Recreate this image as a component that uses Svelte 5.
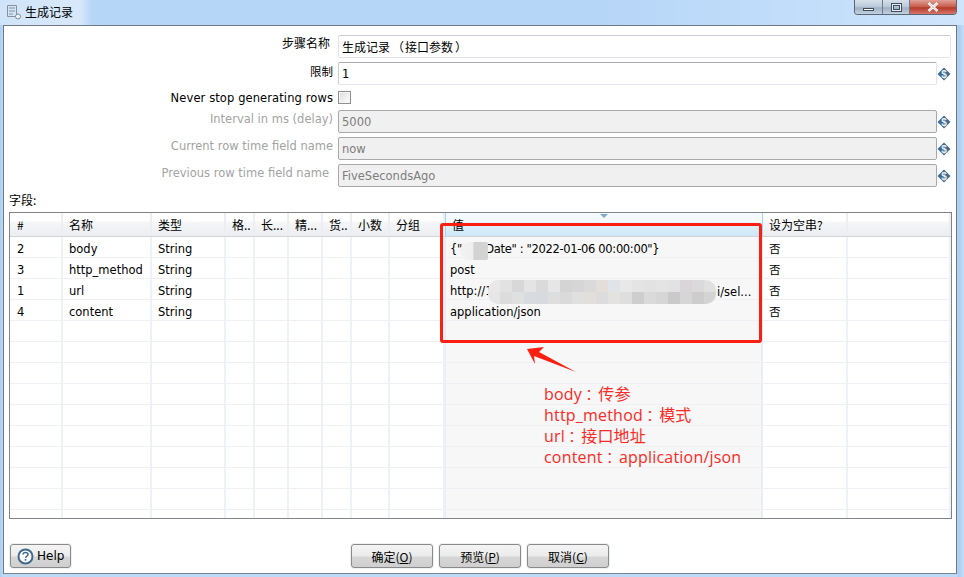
<script>
  const columns = [
    { label: "#", key: "id" },
    { label: "名称", key: "name" },
    { label: "类型", key: "type" },
    { label: "格.." },
    { label: "长..." },
    { label: "精..." },
    { label: "货.." },
    { label: "小数" },
    { label: "分组" },
    { label: "值", key: "value", sorted: true },
    { label: "设为空串?", key: "nul" },
    { label: "" },
  ];

  const rows = [
    { id: "2", name: "body", type: "String", value: '{"       Date" : "2022-01-06 00:00:00"}', nul: "否", tight: true },
    { id: "3", name: "http_method", type: "String", value: "post", nul: "否" },
    { id: "1", name: "url", type: "String", value: "http://1", nul: "否" },
    { id: "4", name: "content", type: "String", value: "application/json", nul: "否" },
    {}, {}, {}, {}, {}, {}, {}, {}, {}, {},
  ];

  const fields = [
    { label: "Interval in ms (delay)", value: "5000" },
    { label: "Current row time field name", value: "now" },
    { label: "Previous row time field name", value: "FiveSecondsAgo", inset: true },
  ];

  const notes = [
    ["body", "传参"],
    ["http_method", "模式"],
    ["url", "接口地址"],
    ["content", "application/json"],
  ];

  // mosaic hiding the url host
  const tiles = [
    "#e8e8e8", "#e2e2e2", "#d8d8d8", "#e4e4e4", "#dadada", "#e6e6e6", "#d4d4d4", "#d6d6d6", "#dadada", "#e3ded9", "#e0e4e9", "#e8e8e8", "#e4e4e4", "#e2e2e2", "#e4e4e4", "#e2e2e2", "#dad5d8", "#dadada", "#e0e0e0",
    "#e6e6e6", "#dcdcdc", "#e0e0e0", "#d8dbe0", "#d7dade", "#dedede", "#dadada", "#e0e0e0", "#e2ded9", "#dcdcdc", "#e4e2e0", "#dedede", "#cecece", "#dadada", "#d6d6d6", "#cacaca", "#d6d6d6", "#cdcdcd", "#d4d4d4",
  ];
</script>

<div class="window">
  <header class="titlebar">
    <svg class="app-icon" width="16" height="16" viewBox="0 0 16 16">
      <path d="M1.5 1.5h9v11h-9z M3 4h6 M3 7h6 M3 10h4" fill="none" stroke="#8a9098" stroke-width="1" />
      <circle cx="12" cy="12.5" r="2.5" fill="#eef3f8" stroke="#7d8b99" />
    </svg>
    <span class="title">生成记录</span>
    <div class="controls">
      <div class="ctl min"><i></i></div>
      <div class="ctl max"><i></i></div>
      <div class="ctl close">
        <svg width="14" height="10" viewBox="0 0 14 10">
          <path d="M2.5 1l9 8M11.5 1l-9 8" stroke="#fff" stroke-width="2.6" />
          <path d="M2.5 1l9 8M11.5 1l-9 8" stroke="#6b3a36" stroke-width="0.5" opacity="0.5" />
        </svg>
      </div>
    </div>
  </header>

  <main class="panel">
    <section class="form">
      <label class="up">步骤名称</label>
      <div class="input wide">生成记录<span class="paren open">（</span>接口参数<span class="paren close-p">）</span></div>

      <label>限制</label>
      <div class="input strong">1</div>
      {@render varIcon()}

      <label class="plain">Never stop generating rows</label>
      <div class="check-row"><span class="check"></span></div>
      <span></span>

      {#each fields as f}
        <label class="off" class:inset={f.inset}>{f.label}</label>
        <div class="input disabled">{f.value}</div>
        {@render varIcon()}
      {/each}
    </section>

    <div class="fields-label">字段:</div>

    <section class="table">
      <div class="row head">
        {#each columns as c}
          <div class="th" class:sorted={c.sorted}>
            {c.label}
            {#if c.sorted}<span class="sort"></span>{/if}
          </div>
        {/each}
      </div>
      {#each rows as r}
        <div class="row">
          {#each columns as c}
            <div class="td" class:sorted={c.sorted} class:tight={c.sorted && r.tight}>
              {c.key ? (r[c.key] ?? "") : ""}
            </div>
          {/each}
        </div>
      {/each}

      <!-- annotations drawn on top of the grid -->
      <div class="smudge"></div>
      <div class="mosaic">
        {#each tiles as t}<span style="background:{t}"></span>{/each}
      </div>
      <div class="tail">i/sel...</div>
      <div class="redbox"></div>
      <svg class="arrow" width="60" height="32" viewBox="0 0 60 32">
        <path d="M1 3L18 1L13 6L50 26L8 10L9 18Z" fill="#fb1f12" />
      </svg>
      <div class="notes">
        {#each notes as n}
          <div>{n[0]}<span class="colon">：</span>{n[1]}</div>
        {/each}
      </div>
    </section>

    <footer class="footer">
      <button class="btn help">
        <svg width="17" height="17" viewBox="0 0 17 17">
          <circle cx="8.5" cy="8.5" r="7" fill="#fff" stroke="#3f6b8c" stroke-width="2" />
          <path d="M6 6.6c0-1.5 1.2-2.2 2.5-2.2s2.5.8 2.5 2.1c0 1.8-2.4 1.7-2.4 3.4" fill="none" stroke="#3f6b8c" stroke-width="1.5" />
          <rect x="7.7" y="11" width="1.7" height="1.7" fill="#3f6b8c" />
        </svg>
        Help
      </button>
      <div class="actions">
        <button class="btn">确定(<u>O</u>)</button>
        <button class="btn">预览(<u>P</u>)</button>
        <button class="btn">取消(<u>C</u>)</button>
      </div>
    </footer>
  </main>
</div>

{#snippet varIcon()}
  <svg class="var" width="14" height="14" viewBox="0 0 14 14">
    <path d="M7 0.5L13.5 7L7 13.5L0.5 7Z" fill="#3f6b8c" />
    <text x="7" y="10.5" text-anchor="middle" font-size="10" font-weight="700" fill="#e8eef3" font-family="Liberation Sans, sans-serif">$</text>
  </svg>
{/snippet}

<style>
  :global(body) {
    margin: 0;
  }
  .window {
    width: 964px;
    height: 577px;
    box-sizing: border-box;
    padding: 0 7px 3px 3px;
    display: flex;
    flex-direction: column;
    overflow: hidden;
    background: linear-gradient(90deg, #a9cdf3 0, #bcd9f7 3px, #bcd9f7 957px, #a9cbf0 958px, #c4def8 964px);
    font-family: "DejaVu Sans", "Noto Sans CJK SC", sans-serif;
    font-size: 11.5px;
    color: #000;
  }
  .titlebar {
    height: 25px;
    flex: none;
    display: flex;
    align-items: center;
    gap: 3px;
    margin: 0 -7px 0 -3px;
    padding: 0 7px 0 6px;
    background: linear-gradient(90deg, #d0e4f9 0, #d8e8fa 80px, #b6d6f8 92px, #b6d6f8 600px, #c6e0fb 860px, #cfe5fb 964px);
  }
  .app-icon {
    margin-bottom: 2px;
  }
  .title {
    font-family: "Noto Sans CJK SC", sans-serif;
    font-size: 12px;
    margin-bottom: 2px;
  }
  .controls {
    margin-left: auto;
    align-self: flex-start;
    display: flex;
    height: 15px;
    border: 1px solid #5a6674;
    border-top: 0;
    border-radius: 0 0 4px 4px;
    overflow: hidden;
    box-sizing: border-box;
    width: 103px;
  }
  .ctl {
    display: flex;
    align-items: center;
    justify-content: center;
    box-sizing: border-box;
    background: linear-gradient(#d6e0ea, #b9c8d8 50%, #9db0c4 55%, #c2d0de);
    border-right: 1px solid #6e7c8a;
  }
  .min { width: 28px; }
  .max { width: 27px; }
  .close {
    flex: 1;
    border-right: 0;
    background: linear-gradient(#e0a096, #c75a4a 50%, #b13a2a 55%, #d8766a);
  }
  .min i {
    width: 11px;
    height: 3px;
    margin-top: 5px;
    border: 1px solid #3f4d5c;
    background: #fff;
    box-sizing: border-box;
  }
  .max i {
    width: 11px;
    height: 9px;
    border: 1px solid #3f4d5c;
    box-shadow: inset 0 0 0 1px #e8eef4, inset 0 0 0 2px #3f4d5c;
    box-sizing: border-box;
  }
  .panel {
    flex: 1;
    min-height: 0;
    display: flex;
    flex-direction: column;
    background: #fff;
    border: 1px solid #6f7780;
    border-bottom-color: #7b838c;
    padding: 0 5px;
    box-sizing: border-box;
  }
  .form {
    display: grid;
    grid-template-columns: 324px 599px 13px;
    column-gap: 5px;
    row-gap: 4px;
    padding-top: 9px;
  }
  .form > :global(.var) {
    margin-left: -5px;
    align-self: center;
  }
  label {
    text-align: right;
    align-self: center;
    line-height: 14px;
    padding-bottom: 3px;
    white-space: nowrap;
  }
  label.up {
    padding-right: 3px;
    padding-bottom: 5px;
    font-size: 12px;
  }
  label.plain {
    padding: 2px 0 0;
    line-height: 15px;
    letter-spacing: 0.1px;
  }
  label.off {
    color: #a3a3a3;
    padding-bottom: 5px;
  }
  label.inset {
    padding-right: 4px;
  }
  .input {
    height: 23px;
    box-sizing: border-box;
    border: 1px solid #e3e5ea;
    border-top-color: #c9ccd2;
    border-radius: 2px;
    padding: 2px 3px 0;
    line-height: 18px;
    white-space: nowrap;
    background: #fff;
  }
  .input.wide {
    grid-column: 2 / 4;
    margin-right: 4px;
    font-family: "Noto Sans CJK SC", sans-serif;
    font-size: 12px;
  }
  .paren.open {
    margin-left: 2px;
    margin-right: 1px;
  }
  .paren.close-p {
    margin-left: 2px;
  }
  .input.strong {
    border-color: #a9abb0 #dfe3ec #e3e6ee #c9ccd2;
  }
  .input.disabled {
    background: #f0f0f0;
    border-color: #a9a9a9;
    color: #7d7d7d;
  }
  .check-row {
    height: 17px;
    display: flex;
    align-items: center;
  }
  .check {
    width: 13px;
    height: 13px;
    box-sizing: border-box;
    border: 1px solid #8e8f8f;
    background: linear-gradient(135deg, #dcdcdc, #fff);
    box-shadow: inset 0 0 0 1px #f4f4f4;
  }
  .fields-label {
    height: 25px;
    padding-top: 4px;
    box-sizing: border-box;
    font-family: "Noto Sans CJK SC", sans-serif;
    font-size: 12px;
    line-height: 18px;
  }
  .table {
    position: relative;
    height: 307px;
    flex: none;
    box-sizing: border-box;
    border: 1px solid #808488;
    overflow: hidden;
    background: #fff;
    margin-right: -1px;
  }
  .row {
    display: grid;
    grid-template-columns: 53px 89px 74px 29px 34px 34px 29px 38px 55px 318px 85px 1fr;
    height: 21px;
  }
  .row.head {
    height: 24px;
    background: linear-gradient(#fff 0, #fff 8px, #f5f6f8 9px, #eceef1 22px);
    border-bottom: 1px solid #d2d4d8;
    box-sizing: border-box;
  }
  .th {
    position: relative;
    padding: 3px 0 0 6px;
    line-height: 18px;
    white-space: nowrap;
    overflow: hidden;
    border-right: 2px solid #eceef1;
    font-family: "Noto Sans CJK SC", sans-serif;
    font-size: 12px;
    box-sizing: border-box;
  }
  .th:first-child {
    padding-left: 7px;
  }
  .th.sorted {
    background: linear-gradient(#f4fafd 0, #f2f9fd 9px, #e2f2fb 10px, #cfe8f7 22px);
    border-left: 1px solid #9fd7f7;
    border-right: 1px solid #9fd7f7;
  }
  .sort {
    position: absolute;
    left: 154px;
    top: 1px;
    width: 0;
    height: 0;
    border: 4px solid transparent;
    border-top: 4px solid #7fa9cf;
    border-bottom: 0;
  }
  .td {
    box-sizing: border-box;
    padding: 0 0 0 6px;
    line-height: 24px;
    white-space: pre;
    overflow: hidden;
    border-right: 2px solid #eef1f8;
    border-bottom: 1px solid #eef0f4;
  }
  .td:first-child {
    padding-left: 7px;
  }
  .td.sorted {
    background: #f7f7f7;
    border-left: 1px solid #e8ecf6;
    border-right: 2px solid #e8ecf6;
    padding-left: 4px;
  }
  .td.tight {
    letter-spacing: -0.33px;
  }
  .smudge {
    position: absolute;
    left: 450px;
    top: 29px;
    width: 28px;
    height: 18px;
    background: linear-gradient(90deg, #f2f2f2 0, #efefef 45%, #d2d2d2 50%, #d4d4d4);
    border-radius: 9px 2px 2px 9px;
  }
  .mosaic {
    position: absolute;
    left: 478px;
    top: 67px;
    width: 228px;
    height: 24px;
    display: grid;
    grid-template-columns: repeat(19, 12px);
    grid-auto-rows: 12px;
    border-radius: 10px;
    overflow: hidden;
  }
  .tail {
    position: absolute;
    left: 707px;
    top: 68px;
    line-height: 22px;
  }
  .redbox {
    position: absolute;
    left: 430px;
    top: 10px;
    width: 322px;
    height: 120px;
    box-sizing: border-box;
    border: 3px solid #fb1f12;
    border-radius: 3px;
  }
  .arrow {
    position: absolute;
    left: 516px;
    top: 133px;
  }
  .notes {
    position: absolute;
    left: 534px;
    top: 171px;
    font-family: "Open Sans", "Noto Sans CJK SC", sans-serif;
    font-size: 16px;
    line-height: 21px;
    letter-spacing: 0.2px;
    color: #fb2a26;
    white-space: nowrap;
  }
  .notes > div {
    height: 21px;
  }
  .colon {
    font-family: "Noto Sans CJK TC", sans-serif;
    font-size: 14px;
    letter-spacing: 2.2px;
    line-height: 1;
  }
  .footer {
    flex: 1;
    display: grid;
    grid-template-columns: 1fr auto 1fr;
    align-items: start;
    padding-top: 25px;
  }
  .btn {
    width: 82px;
    height: 24px;
    padding: 0;
    border: 1px solid #8a8a8a;
    border-radius: 3px;
    background: linear-gradient(#f4f4f4, #ebebeb 50%, #d6d6d6 55%, #cfcfcf);
    box-shadow: 0 0 0 1px #eef0f2;
    font-family: "Noto Sans CJK SC", sans-serif;
    font-size: 12px;
    color: #000;
  }
  .help {
    width: 61px;
    margin-left: 1px;
    display: flex;
    align-items: center;
    gap: 3px;
    padding-left: 6px;
    font-family: "DejaVu Sans", sans-serif;
    justify-self: start;
    box-sizing: border-box;
  }
  .actions {
    display: flex;
    gap: 6px;
  }
</style>
